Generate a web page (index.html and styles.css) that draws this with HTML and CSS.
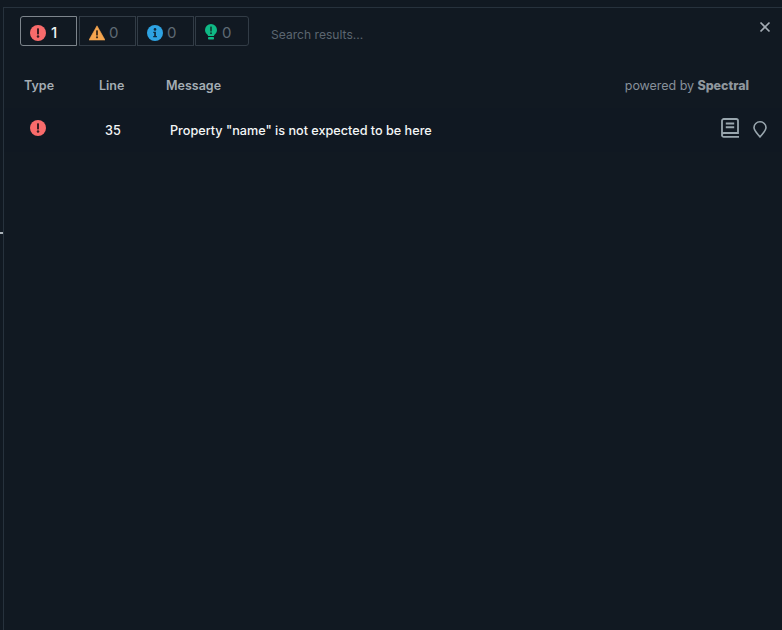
FILE: index.html
```html
<!DOCTYPE html>
<html lang="en">
<head>
<meta charset="utf-8">
<title>Problems</title>
<link rel="stylesheet" href="styles.css">
</head>
<body>
<div class="handle"></div>
<main class="panel">
  <header class="toolbar">
    <div class="filters">
      <button class="filter active"><svg class="ficon" viewBox="0 0 16 16"><circle cx="8" cy="8" r="8" fill="#f96b6b"/><rect x="7" y="3.2" width="2" height="6.2" rx=".6" fill="#3a1c22"/><circle cx="8" cy="11.6" r="1.25" fill="#3a1c22"/></svg><span>1</span></button>
      <button class="filter"><svg class="ficon" viewBox="0 0 16 16"><path d="M8 .8 16 15H0Z" fill="#f5a54f" stroke="#f5a54f" stroke-width=".6" stroke-linejoin="round"/><rect x="7.1" y="5.2" width="1.8" height="5.2" rx=".5" fill="#3a2a1a"/><circle cx="8" cy="12.3" r="1.1" fill="#3a2a1a"/></svg><span>0</span></button>
      <button class="filter"><svg class="ficon" viewBox="0 0 16 16"><circle cx="8" cy="8" r="8" fill="#2ea3e3"/><circle cx="8" cy="4.4" r="1.3" fill="#10283c"/><path d="M6.3 6.8h2.6v4.2h1v1.3H6.2V11h1V8.1h-.9Z" fill="#10283c"/></svg><span>0</span></button>
      <button class="filter last"><svg class="ficon bulb" viewBox="0 0 12 16"><path d="M6 0a6 6 0 0 0-6 6c0 2.2 1.2 3.6 2.3 4.6.5.5.7.9.7 1.4h6c0-.5.2-.9.7-1.4C10.800 9.600 12 8.200 12 6a6 6 0 0 0-6-6Z" fill="#0fb985"/><rect x="3" y="13" width="6" height="2.600" rx=".8" fill="#0fb985"/><rect x="5.200" y="2.400" width="1.600" height="5" rx=".5" fill="#0f3a30"/><circle cx="6" cy="9.300" r="1" fill="#0f3a30"/></svg><span>0</span></button>
    </div>
    <div class="search">Search results...</div>
    <button class="close" aria-label="Close"><svg viewBox="0 0 12 12"><path d="M1.500 1.500 10.500 10.500M10.500 1.500 1.500 10.500" stroke="#a3abb3" stroke-width="1.700" fill="none"/></svg></button>
  </header>
  <div class="head">
    <div class="col-type">Type</div>
    <div class="col-line">Line</div>
    <div class="col-msg">Message</div>
    <div class="powered">powered by <b>Spectral</b></div>
  </div>
  <div class="row">
    <div class="cell-type"><svg class="ficon" viewBox="0 0 16 16"><circle cx="8" cy="8" r="8" fill="#f96b6b"/><rect x="7" y="3.200" width="2" height="6.200" rx=".6" fill="#3a1c22"/><circle cx="8" cy="11.600" r="1.250" fill="#3a1c22"/></svg></div>
    <div class="cell-line">35</div>
    <div class="cell-msg">Property "name" is not expected to be here</div>
    <div class="actions">
      <svg class="book" viewBox="0 0 18 20" fill="none" stroke="#99a6ae" stroke-width="1.800"><path d="M1 16.500V2.800A1.800 1.800 0 0 1 2.800 1H15.200A1.800 1.800 0 0 1 17 2.800V15H2.800A1.800 1.800 0 0 0 1 16.800A1.800 1.800 0 0 0 2.800 18.900H18"/><path d="M4.800 5.500H13.200M4.800 9.200H13.200" stroke-width="2"/></svg>
      <svg class="pin" viewBox="0 0 14 17" fill="none" stroke="#99a6ae" stroke-width="1.600"><path d="M7 16C4.500 12.800 1 9.700 1 6.500A6 5.700 0 0 1 13 6.500C13 9.700 9.500 12.800 7 16Z" stroke-linejoin="round"/></svg>
    </div>
  </div>
</main>
</body>
</html>
```
FILE: styles.css
```css
* { box-sizing: border-box; }
html, body { height: 100%; }
body {
  margin: 0;
  padding: 7px 0 0 3px;
  background: #111922;
  font-family: Inter, "Liberation Sans", sans-serif;
  overflow: hidden;
}
.handle {
  position: absolute;
  left: 0;
  top: 232px;
  width: 3px;
  height: 2px;
  background: #aab2b8;
}
.panel {
  height: 100%;
  background: #111922;
  border-top: 1px solid #27323d;
  border-left: 1px solid #27323d;
}
.toolbar {
  display: flex;
  align-items: center;
  height: 38px;
  padding: 8px 0 0 16px;
  position: relative;
}
.filters { display: flex; gap: 1px; }
.filter {
  display: flex;
  align-items: center;
  gap: 4px;
  width: 57px;
  height: 30px;
  padding: 3px 0 0 9px;
  background: transparent;
  border: 1px solid #323c46;
  color: #5f6a74;
  font: 400 15px Inter, "Liberation Sans", sans-serif;
}
.filter.active {
  margin-right: 1px;
  gap: 5px;
  border-color: #7d858c;
  border-radius: 3px 0 0 3px;
  color: #eef1f3;
  font-weight: 500;
}
.filter.last { width: 54px; border-radius: 0 3px 3px 0; }
.ficon { width: 16px; height: 16px; display: block; }
.bulb { width: 12px; height: 16px; margin-top: -2px; margin-right: 1px; }
.search {
  margin-left: 22px;
  font-size: 12.100px;
  color: #5c6670;
  padding-top: 7px;
}
.close {
  position: absolute;
  right: 11px;
  top: 13px;
  width: 12px;
  height: 12px;
  padding: 0;
  border: 0;
  background: none;
}
.close svg { display: block; width: 12px; height: 12px; }
.head {
  display: flex;
  align-items: center;
  height: 36px;
  margin-top: 21px;
  font-size: 12.500px;
  font-weight: 600;
  color: #a4adb4;
}
.col-type { width: 75px; padding-left: 20px; }
.col-line { width: 87px; padding-left: 20px; }
.col-msg { flex: 1; }
.powered {
  margin-right: 33px;
  font-weight: 400;
  color: #87909a;
  letter-spacing: -0.04px;
}
.powered b { font-weight: 800; color: #8f979e; }
.row {
  display: flex;
  align-items: center;
  height: 44px;
  margin-top: 5px;
  background: #101822;
  font-size: 12.650px;
  font-weight: 450;
  color: #f4f6f7;
}
.cell-type { width: 75px; padding: 0 0 4px 26px; }
.cell-line { width: 91px; padding-left: 26px; }
.cell-msg { flex: 1; }
.actions {
  display: flex;
  align-items: center;
  gap: 14px;
  margin-right: 15px;
}
.book { width: 18px; height: 20px; display: block; margin-bottom: 4px; }
.pin { width: 14px; height: 17px; display: block; margin-bottom: 1px; }
```
